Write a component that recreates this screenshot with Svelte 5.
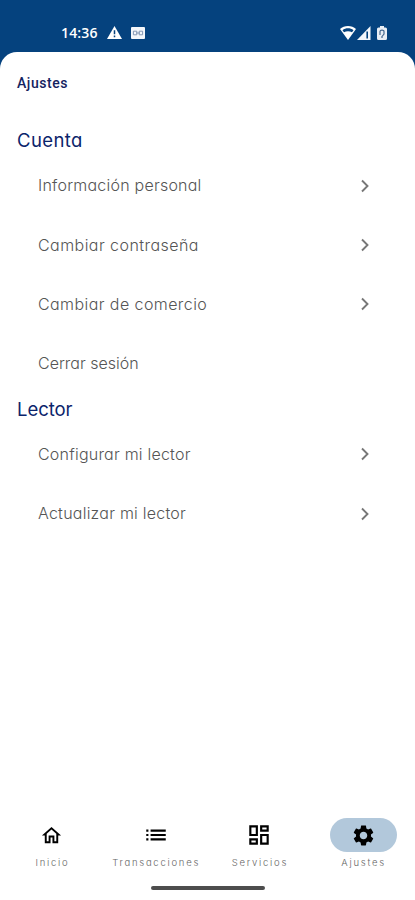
<script>
	const sections = [
		{
			title: 'Cuenta',
			spacing: 0.4,
			items: [
				{ label: 'Información personal', arrow: true, spacing: 0.23 },
				{ label: 'Cambiar contraseña', arrow: true, spacing: 0.45 },
				{ label: 'Cambiar de comercio', arrow: true, spacing: 0.42 },
				{ label: 'Cerrar sesión', arrow: false, spacing: 0 }
			]
		},
		{
			title: 'Lector',
			spacing: -0.05,
			items: [
				{ label: 'Configurar mi lector', arrow: true, spacing: 0.22 },
				{ label: 'Actualizar mi lector', arrow: true, spacing: 0.24 }
			]
		}
	];

	const tabs = [
		{
			label: 'Inicio',
			size: 23,
			path: 'M12 5.69l5 4.5V18h-2v-6H9v6H7v-7.81l5-4.5M12 3L2 12h3v8h6v-6h2v6h6v-8h3L12 3z'
		},
		{
			label: 'Transacciones',
			size: 26,
			path: 'M3 13h2v-2H3v2zm0 4h2v-2H3v2zm0-8h2V7H3v2zm4 4h14v-2H7v2zm0 4h14v-2H7v2zM7 7v2h14V7H7z'
		},
		{
			label: 'Servicios',
			size: 26,
			path: 'M19 5v2h-4V5h4M9 5v6H5V5h4m10 8v6h-4v-6h4M9 17v2H5v-2h4M21 3h-8v6h8V3zM11 3H3v10h8V3zm10 8h-8v10h8V11zm-10 4H3v6h8v-6z'
		},
		{
			label: 'Ajustes',
			size: 25,
			path: 'M19.14 12.94c.04-.3.06-.61.06-.94 0-.32-.02-.64-.07-.94l2.03-1.58c.18-.14.23-.41.12-.61l-1.92-3.32c-.12-.22-.37-.29-.59-.22l-2.39.96c-.5-.38-1.03-.7-1.62-.94l-.36-2.54c-.04-.24-.24-.41-.48-.41h-3.84c-.24 0-.43.17-.47.41l-.36 2.54c-.59.24-1.13.57-1.62.94l-2.39-.96c-.22-.08-.47 0-.59.22L2.74 8.87c-.12.21-.08.47.12.61l2.03 1.58c-.05.3-.09.63-.09.94s.02.64.07.94l-2.03 1.58c-.18.14-.23.41-.12.61l1.92 3.32c.12.22.37.29.59.22l2.39-.96c.5.38 1.03.7 1.62.94l.36 2.54c.05.24.24.41.48.41h3.84c.24 0 .44-.17.47-.41l.36-2.54c.59-.24 1.13-.56 1.62-.94l2.39.96c.22.08.47 0 .59-.22l1.92-3.32c.12-.22.07-.47-.12-.61l-2.01-1.58zM12 15.6c-1.98 0-3.6-1.62-3.6-3.6s1.62-3.6 3.6-3.6 3.6 1.62 3.6 3.6-1.62 3.6-3.6 3.6z'
		}
	];

	let active = $state('Ajustes');
</script>

<div class="screen">
	<div class="status">
		<span class="time">14:36</span>
		<svg class="warn" width="15" height="13" viewBox="0 0 15 13">
			<path d="M7.5 0L15 13H0z" fill="#fff" />
			<path d="M7.5 4.3v4M7.5 9.6v1.6" stroke="#05427e" stroke-width="1.5" />
		</svg>
		<svg class="note" width="14" height="12" viewBox="0 0 14 12">
			<rect width="14" height="12" rx="1" fill="#f4f7fb" />
			<path d="M2.4 4.2h3.4v3.6H2.4zM8.2 4.2h3.4v3.6H8.2zM5 6h4" fill="none" stroke="#8497b4" stroke-width="1" />
		</svg>
		<div class="signals">
			<svg width="16" height="14" viewBox="0 0 16 14">
				<path d="M8 0C4.9 0 2.1 1.1 0 3l8 11 8-11C13.9 1.1 11.1 0 8 0z" fill="#fff" />
				<path d="M2.5 4.2C5.7 1.7 10.3 1.7 13.5 4.2L12 6.3C9.6 4.9 6.4 4.9 4 6.3z" fill="#05427e" />
			</svg>
			<svg width="14" height="14" viewBox="0 0 14 14">
				<path d="M13.5 0v14H0z" fill="#f4f7fb" />
				<path d="M10.2 5.5v7" stroke="#05427e" stroke-width="1.6" />
			</svg>
			<svg class="battery" width="10" height="14" viewBox="0 0 10 14">
				<path d="M3 0h4v1.5h1.5Q10 1.5 10 3v9.5Q10 14 8.5 14h-7Q0 14 0 12.5V3Q0 1.5 1.5 1.5H3z" fill="#e9eef5" />
				<path d="M3 9V5.5Q3 4.2 5 4.2T7 5.5V8L5 10.5M5 10v2" fill="none" stroke="#47698f" stroke-width="1.2" />
			</svg>
		</div>
	</div>

	<main class="sheet">
		<h1>Ajustes</h1>
		{#each sections as section}
			<section>
				<h2 style="letter-spacing: {section.spacing}px">{section.title}</h2>
				{#each section.items as item}
					<div class="row">
						<span style="letter-spacing: {item.spacing}px">{item.label}</span>
						{#if item.arrow}
							<svg width="10" height="14" viewBox="0 0 10 14">
								<path d="M2 1.5L7.5 7L2 12.5" fill="none" stroke="#777" stroke-width="1.9" />
							</svg>
						{/if}
					</div>
				{/each}
			</section>
		{/each}
	</main>

	<nav>
		{#each tabs as tab}
			<button class:active={active === tab.label} onclick={() => (active = tab.label)}>
				<span class="pill">
					<svg width={tab.size} height={tab.size} viewBox="0 0 24 24"><path d={tab.path} /></svg>
				</span>
				<span class="label">{tab.label}</span>
			</button>
		{/each}
	</nav>
	<div class="handle"></div>
</div>

<style>
	:global(body) { margin: 0; }

	.screen {
		width: 415px; height: 900px; overflow: hidden;
		display: flex; flex-direction: column;
		background: #05427e; font-family: Inter, "Noto Sans", sans-serif;
		/* single-storey a */
		font-feature-settings: "cv11";
	}

	.status {
		height: 52px; flex: none; box-sizing: border-box;
		padding: 13px 28px 0 61px;
		display: flex; align-items: center; color: #fff;
	}
	.time { width: 46px; font-family: "Open Sans", sans-serif; font-size: 14px; font-weight: 600; letter-spacing: 0.15px; }
	.note { margin-left: 9px; }
	.signals { margin-left: auto; display: flex; align-items: center; gap: 1px; }
	.battery { margin-left: 5px; }

	.sheet {
		flex: 1; box-sizing: border-box; padding-top: 20px;
		background: #fff; border-radius: 17px 17px 0 0;
	}
	h1 {
		margin: 0 0 36px 17px; height: 22px; line-height: 22px;
		font-family: Roboto, sans-serif; font-size: 14px; font-weight: 500; color: #14235f; letter-spacing: 0.55px;
	}
	h2 {
		margin: 0 0 0 17px; height: 20px; line-height: 20px;
		font-size: 18.5px; font-weight: 400; color: #0b246b;
	}
	section { height: 268.5px; }
	.row {
		height: 59.2px; padding: 0 45px 0 38px;
		display: flex; align-items: center; justify-content: space-between;
		font-size: 16px; font-weight: 300; color: #555; white-space: nowrap;
	}
	.row span { margin-top: -1px; }
	h2 + .row { margin-top: 6.3px; }

	nav { height: 68px; flex: none; display: flex; background: #fff; }
	button {
		flex: 1; padding: 0; border: none; background: none;
		display: flex; flex-direction: column; align-items: center;
		font-family: inherit; font-feature-settings: inherit; cursor: pointer;
	}
	.pill {
		width: 67px; height: 34px; border-radius: 17px;
		display: flex; align-items: center; justify-content: center;
	}
	.active .pill { background: #b2c8db; }
	.label { margin-top: 4px; line-height: 14px; font-size: 9.5px; letter-spacing: 1.75px; margin-right: -1px; color: #666; font-weight: 300; }

	.handle {
		height: 14px; flex: none; background: #fff;
	}
	.handle::before {
		content: ""; display: block; width: 114px; height: 4px; margin: 0 auto;
		border-radius: 2px; background: #4d4d4d;
	}
</style>
